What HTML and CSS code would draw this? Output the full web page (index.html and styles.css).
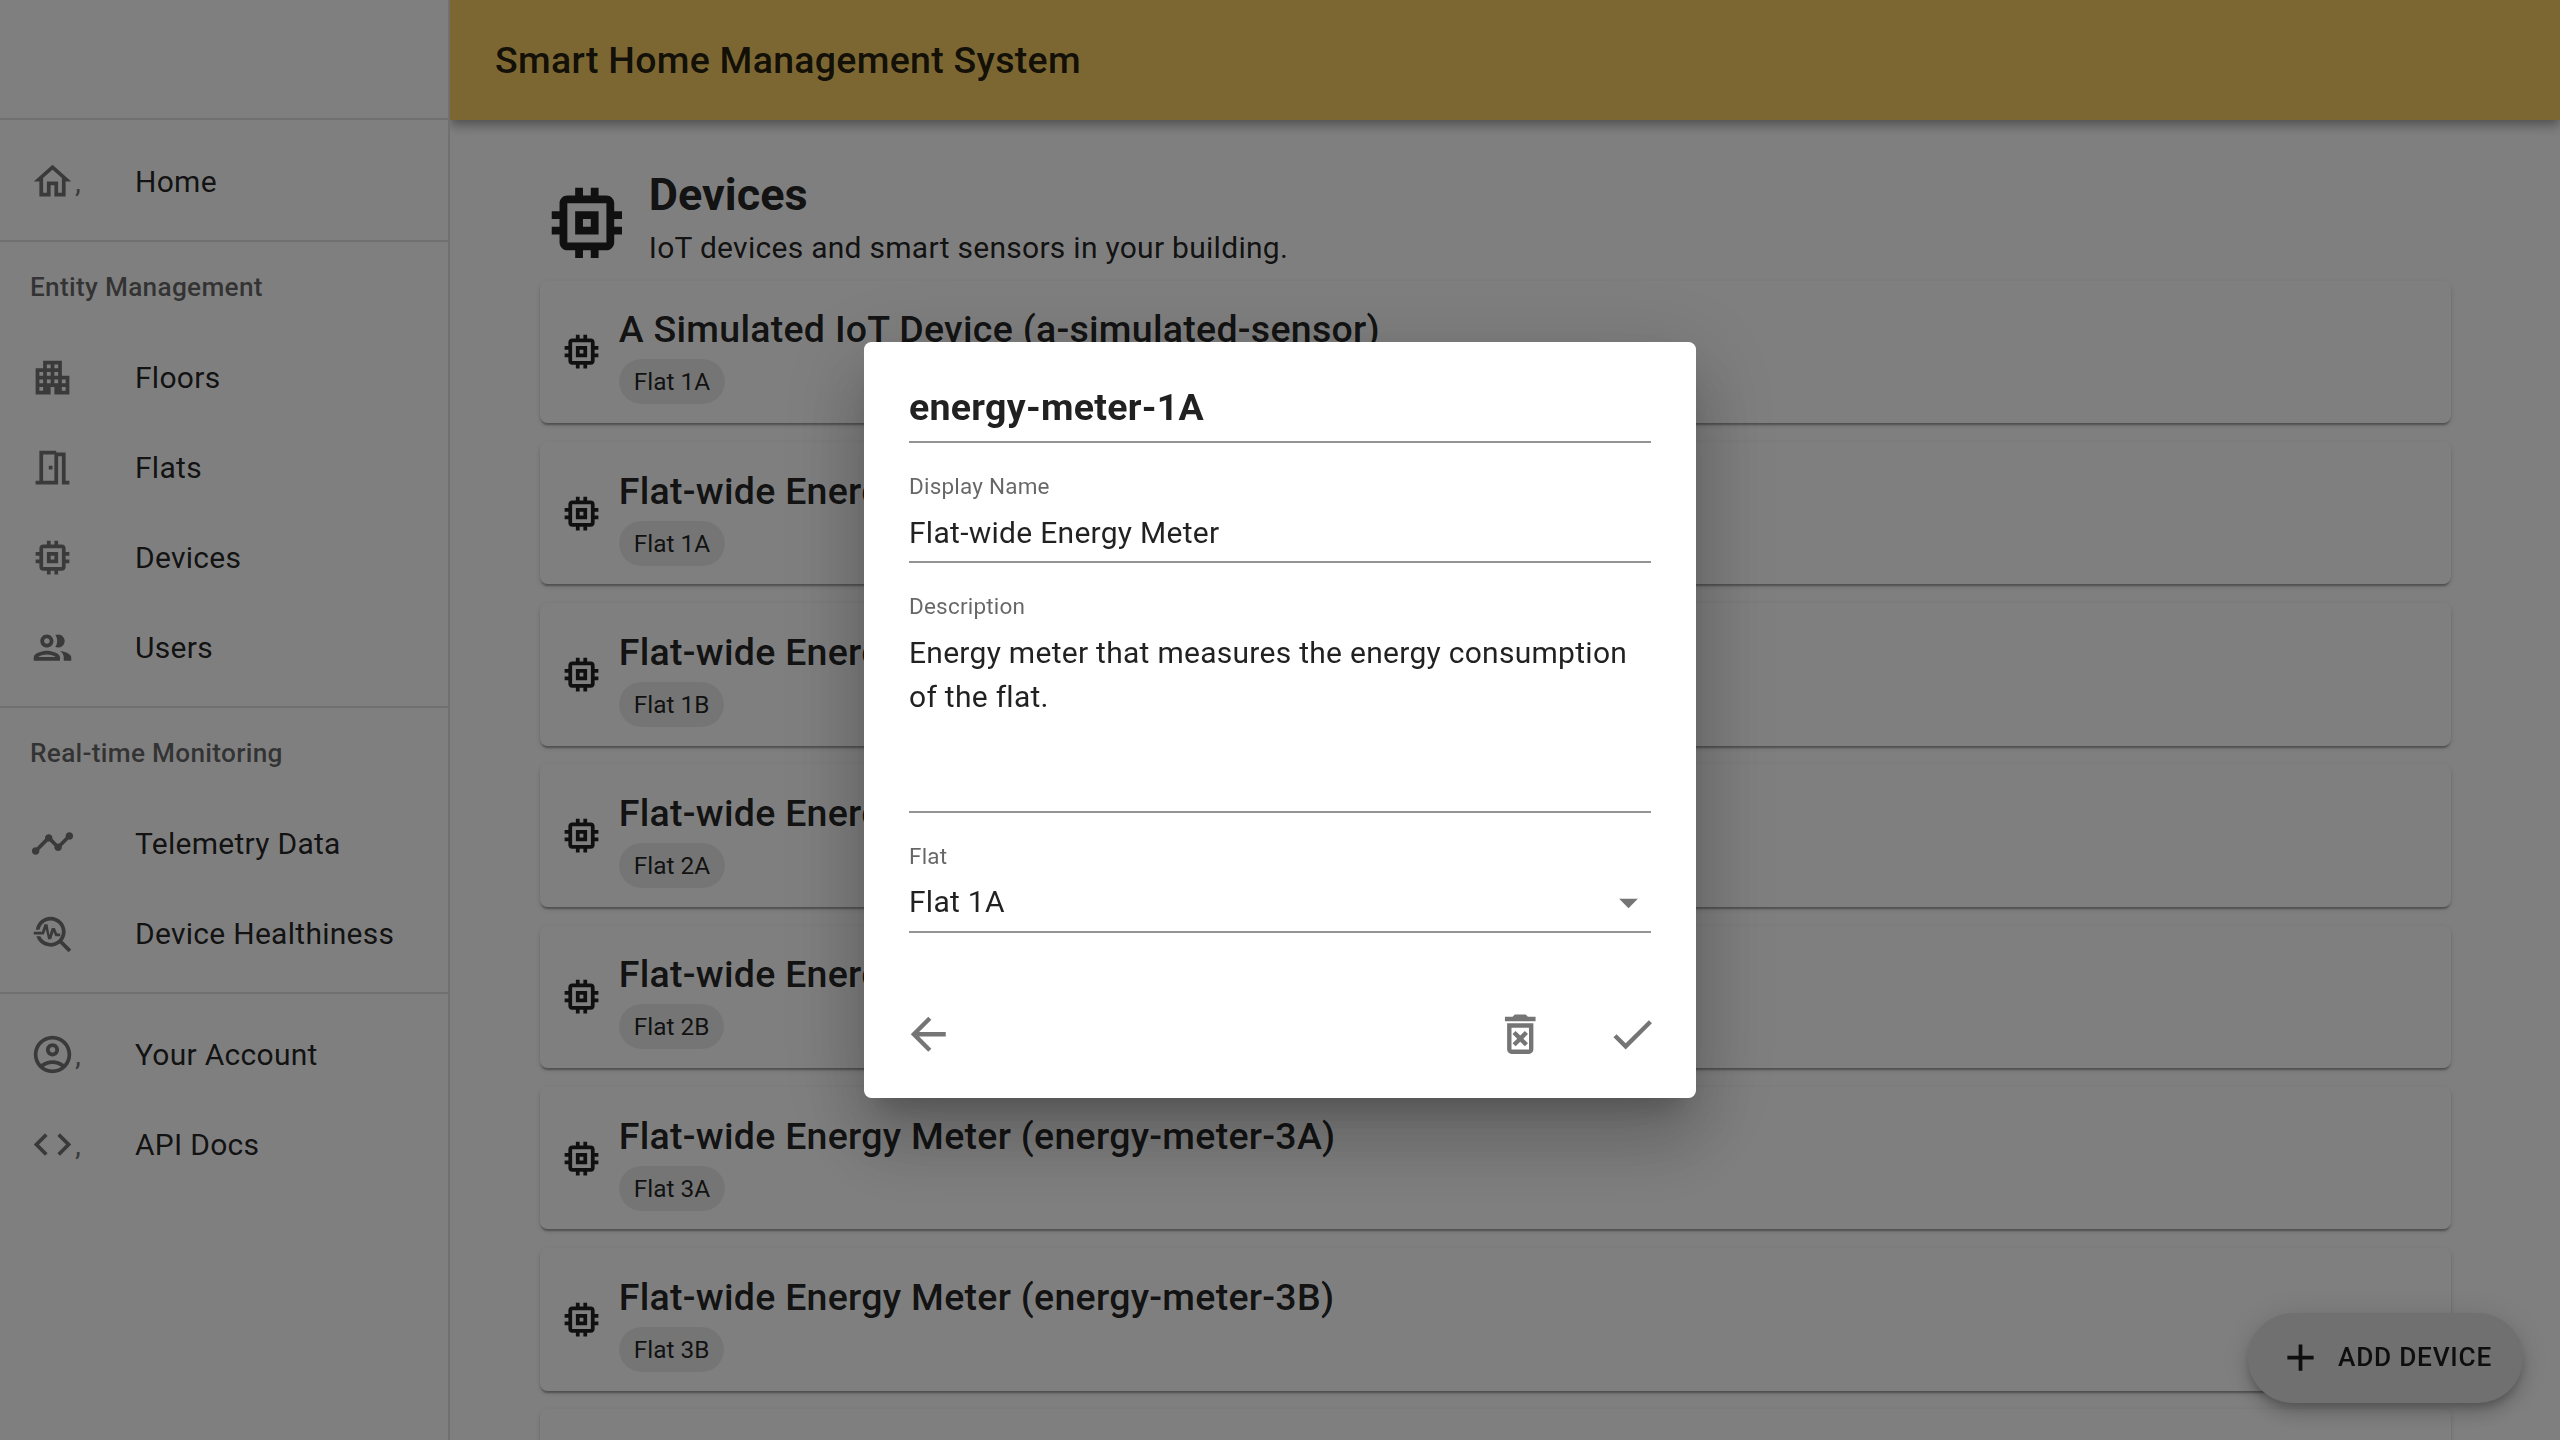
FILE: index.html
```html
<!DOCTYPE html>
<html lang="en">
<head>
    <meta charset="UTF-8">
    <title>Devices - Smart Home Management System</title>
    <link rel="stylesheet" href="styles.css">
</head>
<body>
    <svg class="icon-defs" aria-hidden="true">
        <symbol id="i-memory" viewBox="0 0 24 24"><path d="M15 9H9v6h6V9zm-2 4h-2v-2h2v2zm8-2V9h-2V7c0-1.1-.9-2-2-2h-2V3h-2v2h-2V3H9v2H7c-1.1 0-2 .9-2 2v2H3v2h2v2H3v2h2v2c0 1.1.9 2 2 2h2v2h2v-2h2v2h2v-2h2c1.1 0 2-.9 2-2v-2h2v-2h-2v-2h2zm-4 6H7V7h10v10z"/></symbol>
    </svg>

    <div class="app">
        <nav class="drawer">
            <div class="drawer-top"></div>
            <ul class="nav-list first">
                <li class="nav-item">
                    <span class="nav-icon"><svg viewBox="0 0 24 24"><path d="M12 5.69l5 4.5V18h-2v-6H9v6H7v-7.81l5-4.5M12 3L2 12h3v8h6v-6h2v6h6v-8h3L12 3z"/></svg>,</span>
                    <span>Home</span>
                </li>
            </ul>
            <ul class="nav-list no-top">
                <li class="nav-header">Entity Management</li>
                <li class="nav-item">
                    <span class="nav-icon"><svg viewBox="0 0 24 24"><path d="M17 11V3H7v4H3v14h8v-4h2v4h8V11h-4zM7 19H5v-2h2v2zm0-4H5v-2h2v2zm0-4H5V9h2v2zm4 4H9v-2h2v2zm0-4H9V9h2v2zm0-4H9V5h2v2zm4 8h-2v-2h2v2zm0-4h-2V9h2v2zm0-4h-2V5h2v2zm4 12h-2v-2h2v2zm0-4h-2v-2h2v2z"/></svg></span>
                    <span>Floors</span>
                </li>
                <li class="nav-item">
                    <span class="nav-icon"><svg viewBox="0 0 24 24"><path d="M19 19V4h-5V3H5v16H3v2h12V6h2v15h4v-2h-2zm-6 0H7V5h6v14zm-3-8h2v2h-2z"/></svg></span>
                    <span>Flats</span>
                </li>
                <li class="nav-item">
                    <span class="nav-icon"><svg viewBox="0 0 24 24"><use href="#i-memory"/></svg></span>
                    <span>Devices</span>
                </li>
                <li class="nav-item">
                    <span class="nav-icon"><svg viewBox="0 0 24 24"><path d="M9 13.75c-2.34 0-7 1.17-7 3.5V19h14v-1.75c0-2.33-4.66-3.5-7-3.5zM4.34 17c.84-.58 2.87-1.25 4.66-1.25s3.82.67 4.66 1.25H4.34zM9 12c1.93 0 3.5-1.57 3.5-3.5S10.93 5 9 5 5.5 6.57 5.5 8.5 7.07 12 9 12zm0-5c.83 0 1.5.67 1.5 1.5S9.83 10 9 10s-1.5-.67-1.5-1.5S8.17 7 9 7zm7.04 6.81c1.16.84 1.96 1.96 1.96 3.44V19h4v-1.75c0-2.02-3.5-3.17-5.96-3.44zM15 12c1.93 0 3.5-1.57 3.5-3.5S16.93 5 15 5c-.54 0-1.04.13-1.5.35.63.89 1 1.98 1 3.15s-.37 2.26-1 3.15c.46.22.96.35 1.5.35z"/></svg></span>
                    <span>Users</span>
                </li>
            </ul>
            <ul class="nav-list no-top">
                <li class="nav-header">Real-time Monitoring</li>
                <li class="nav-item">
                    <span class="nav-icon"><svg viewBox="0 0 24 24"><path d="M23 8c0 1.1-.9 2-2 2-.18 0-.35-.02-.51-.07l-3.56 3.55c.05.16.07.34.07.52 0 1.1-.9 2-2 2s-2-.9-2-2c0-.18.02-.36.07-.52l-2.55-2.55c-.16.05-.34.07-.52.07s-.36-.02-.52-.07l-4.55 4.56c.05.16.07.33.07.51 0 1.1-.9 2-2 2s-2-.9-2-2 .9-2 2-2c.18 0 .35.02.51.07l4.56-4.55C8.02 9.36 8 9.18 8 9c0-1.1.9-2 2-2s2 .9 2 2c0 .18-.02.36-.07.52l2.55 2.55c.16-.05.34-.07.52-.07s.36.02.52.07l3.55-3.56C19.02 8.35 19 8.18 19 8c0-1.1.9-2 2-2s2 .9 2 2z"/></svg></span>
                    <span>Telemetry Data</span>
                </li>
                <li class="nav-item">
                    <span class="nav-icon"><svg viewBox="0 0 24 24"><path d="M22 20.59l-4.69-4.69C18.37 14.55 19 12.85 19 11c0-4.42-3.58-8-8-8-4.08 0-7.44 3.05-7.93 7h2.02C5.57 7.17 8.03 5 11 5c3.31 0 6 2.69 6 6s-2.69 6-6 6c-2.42 0-4.5-1.44-5.45-3.5H3.4C4.45 16.69 7.46 19 11 19c1.85 0 3.55-.63 4.9-1.69L20.59 22 22 20.59z"/><path d="M8.43 9.69L9.65 15h1.64l1.26-3.78.95 2.28h2.6V12h-1.6l-1.25-3h-1.64l-1.26 3.8L9.35 7H7.7l-1.35 4H2v1.5h5.4z"/></svg></span>
                    <span>Device Healthiness</span>
                </li>
            </ul>
            <ul class="nav-list">
                <li class="nav-item">
                    <span class="nav-icon"><svg viewBox="0 0 24 24"><path d="M12 2C6.48 2 2 6.48 2 12s4.48 10 10 10 10-4.48 10-10S17.52 2 12 2zM7.35 18.5C8.66 17.56 10.26 17 12 17s3.34.56 4.65 1.5c-1.31.94-2.91 1.5-4.65 1.5s-3.34-.56-4.65-1.5zm10.79-1.38C16.45 15.8 14.32 15 12 15s-4.45.8-6.14 2.12C4.7 15.73 4 13.95 4 12c0-4.42 3.58-8 8-8s8 3.58 8 8c0 1.95-.7 3.73-1.86 5.12z"/><path d="M12 6c-1.93 0-3.5 1.57-3.5 3.5S10.07 13 12 13s3.5-1.57 3.5-3.5S13.93 6 12 6zm0 5c-.83 0-1.5-.67-1.5-1.5S11.17 8 12 8s1.5.67 1.5 1.5S12.83 11 12 11z"/></svg>,</span>
                    <span>Your Account</span>
                </li>
                <li class="nav-item">
                    <span class="nav-icon"><svg viewBox="0 0 24 24"><path d="M9.4 16.6L4.8 12l4.6-4.6L8 6l-6 6 6 6 1.4-1.4zm5.2 0l4.6-4.6-4.6-4.6L16 6l6 6-6 6-1.4-1.4z"/></svg>,</span>
                    <span>API Docs</span>
                </li>
            </ul>
        </nav>

        <div class="content">
            <header class="app-bar">Smart Home Management System</header>
            <main class="page">
                <div class="page-head">
                    <svg class="page-icon" viewBox="0 0 24 24"><use href="#i-memory"/></svg>
                    <div>
                        <h1 class="page-title">Devices</h1>
                        <p class="page-sub">IoT devices and smart sensors in your building.</p>
                    </div>
                </div>

                <div class="card">
                    <svg class="card-icon" viewBox="0 0 24 24"><use href="#i-memory"/></svg>
                    <div>
                        <div class="card-title">A Simulated IoT Device (a-simulated-sensor)</div>
                        <span class="chip">Flat 1A</span>
                    </div>
                </div>
                <div class="card">
                    <svg class="card-icon" viewBox="0 0 24 24"><use href="#i-memory"/></svg>
                    <div>
                        <div class="card-title">Flat-wide Energy Meter (energy-meter-1A)</div>
                        <span class="chip">Flat 1A</span>
                    </div>
                </div>
                <div class="card">
                    <svg class="card-icon" viewBox="0 0 24 24"><use href="#i-memory"/></svg>
                    <div>
                        <div class="card-title">Flat-wide Energy Meter (energy-meter-1B)</div>
                        <span class="chip">Flat 1B</span>
                    </div>
                </div>
                <div class="card">
                    <svg class="card-icon" viewBox="0 0 24 24"><use href="#i-memory"/></svg>
                    <div>
                        <div class="card-title">Flat-wide Energy Meter (energy-meter-2A)</div>
                        <span class="chip">Flat 2A</span>
                    </div>
                </div>
                <div class="card">
                    <svg class="card-icon" viewBox="0 0 24 24"><use href="#i-memory"/></svg>
                    <div>
                        <div class="card-title">Flat-wide Energy Meter (energy-meter-2B)</div>
                        <span class="chip">Flat 2B</span>
                    </div>
                </div>
                <div class="card">
                    <svg class="card-icon" viewBox="0 0 24 24"><use href="#i-memory"/></svg>
                    <div>
                        <div class="card-title">Flat-wide Energy Meter (energy-meter-3A)</div>
                        <span class="chip">Flat 3A</span>
                    </div>
                </div>
                <div class="card">
                    <svg class="card-icon" viewBox="0 0 24 24"><use href="#i-memory"/></svg>
                    <div>
                        <div class="card-title">Flat-wide Energy Meter (energy-meter-3B)</div>
                        <span class="chip">Flat 3B</span>
                    </div>
                </div>
                <div class="card"></div>
            </main>
        </div>
    </div>

    <button class="fab">
        <svg viewBox="0 0 24 24"><path d="M19 13h-6v6h-2v-6H5v-2h6V5h2v6h6v2z"/></svg>
        Add Device
    </button>

    <!-- edit dialog -->
    <div class="backdrop">
        <div class="dialog">
            <h2 class="dialog-title">energy-meter-1A</h2>
            <div class="field">
                <div class="field-label">Display Name</div>
                <div class="field-value">Flat-wide Energy Meter</div>
            </div>
            <div class="field">
                <div class="field-label">Description</div>
                <div class="field-value multiline">Energy meter that measures the energy consumption of the flat.</div>
            </div>
            <div class="field">
                <div class="field-label">Flat</div>
                <div class="field-value select">
                    <span>Flat 1A</span>
                    <svg viewBox="0 0 24 24"><path d="M7 10l5 5 5-5z"/></svg>
                </div>
            </div>
            <div class="dialog-actions">
                <button class="icon-btn" aria-label="Back"><svg viewBox="0 0 24 24"><path d="M20 11H7.83l5.59-5.59L12 4l-8 8 8 8 1.41-1.41L7.83 13H20v-2z"/></svg></button>
                <span class="spacer"></span>
                <button class="icon-btn" aria-label="Delete"><svg viewBox="0 0 24 24"><path d="M14.12 10.47L12 12.59l-2.13-2.12-1.41 1.41L10.59 14l-2.12 2.12 1.41 1.41L12 15.41l2.12 2.12 1.41-1.41L13.41 14l2.12-2.12zM15.5 4l-1-1h-5l-1 1H5v2h14V4zM6 19c0 1.1.9 2 2 2h8c1.1 0 2-.9 2-2V7H6v12zM8 9h8v10H8V9z"/></svg></button>
                <button class="icon-btn" aria-label="Save"><svg viewBox="0 0 24 24"><path d="M9 16.17L4.83 12l-1.42 1.41L9 19 21 7l-1.41-1.41z"/></svg></button>
            </div>
        </div>
    </div>
</body>
</html>
```

FILE: styles.css
```css
* {
    box-sizing: border-box;
}
html, body {
    height: 100%;
}
body {
    margin: 0;
    overflow: hidden;
    font-family: 'Roboto', 'Liberation Sans', sans-serif;
    font-size: 30px;
    letter-spacing: 0.28px;
    color: rgba(0, 0, 0, 0.87);
    background-color: #fff;
}
svg {
    fill: currentColor;
    display: block;
}
.icon-defs {
    display: none;
}
.app {
    display: flex;
    height: 100%;
    overflow: hidden;
}

/* sidebar */
.drawer {
    width: 450px;
    flex-shrink: 0;
    border-right: 2px solid rgba(0, 0, 0, 0.12);
}
.drawer-top {
    height: 120px;
    border-bottom: 2px solid rgba(0, 0, 0, 0.12);
}
.nav-list {
    list-style: none;
    margin: 0;
    padding: 15px 0;
    border-bottom: 2px solid rgba(0, 0, 0, 0.12);
}
.nav-list:last-child {
    border-bottom: none;
}
.nav-list.first {
    padding: 16px 0 14px;
}
.nav-list.no-top {
    padding: 0 0 14px;
}
.nav-header {
    height: 90px;
    line-height: 90px;
    padding-left: 30px;
    font-size: 26.25px;
    font-weight: 500;
    color: rgba(0, 0, 0, 0.6);
}
.nav-item {
    display: flex;
    align-items: center;
    height: 90px;
    padding-left: 30px;
}
.nav-icon {
    display: flex;
    align-items: center;
    width: 105px;
    flex-shrink: 0;
    color: rgba(0, 0, 0, 0.54);
}
.nav-icon svg {
    width: 45px;
    height: 45px;
}

/* top bar */
.content {
    flex: 1;
    min-width: 0;
    height: 100%;
    overflow: hidden;
}
.app-bar {
    height: 120px;
    line-height: 120px;
    padding-left: 45px;
    font-size: 37.5px;
    font-weight: 500;
    background-color: #f9ce66;
    box-shadow: 0 4px 8px -2px rgba(0, 0, 0, 0.2), 0 8px 9px 0 rgba(0, 0, 0, 0.14), 0 2px 19px 0 rgba(0, 0, 0, 0.12);
    position: relative;
}

/* device list */
.page {
    padding: 45px 109px 0 90px;
}
.page-head {
    display: flex;
    align-items: flex-start;
    gap: 15px;
    margin-bottom: 10.5px;
}
.page-icon {
    width: 93.75px;
    height: 93.75px;
    margin-top: 11px;
    flex-shrink: 0;
}
.page-title {
    margin: 0;
    font-size: 45px;
    font-weight: 700;
    line-height: 60px;
    letter-spacing: 0;
}
.page-sub {
    margin: 0;
    line-height: 45px;
}
.card {
    display: flex;
    align-items: center;
    gap: 15px;
    height: 142.5px;
    margin-bottom: 18.75px;
    padding-left: 18.75px;
    background-color: #fff;
    border-radius: 7.5px;
    box-shadow: 0 4px 2px -2px rgba(0, 0, 0, 0.2), 0 2px 2px 0 rgba(0, 0, 0, 0.14), 0 2px 6px 0 rgba(0, 0, 0, 0.12);
}
.card-icon {
    width: 45px;
    height: 45px;
    flex-shrink: 0;
}
.card-title {
    font-size: 37.5px;
    font-weight: 500;
    line-height: 60px;
}
.chip {
    display: inline-block;
    height: 45px;
    line-height: 45px;
    padding: 0 15px;
    font-size: 24.4px;
    letter-spacing: 0;
    border-radius: 22.5px;
    background-color: rgba(0, 0, 0, 0.08);
    vertical-align: top;
}

/* floating button */
.fab {
    position: fixed;
    right: 37px;
    bottom: 37px;
    display: flex;
    align-items: center;
    gap: 15px;
    height: 90px;
    padding: 0 31px 2px 30px;
    border: none;
    border-radius: 45px;
    font-family: inherit;
    font-size: 26.25px;
    font-weight: 500;
    letter-spacing: 0.75px;
    text-transform: uppercase;
    color: rgba(0, 0, 0, 0.87);
    background-color: #e0e0e0;
    box-shadow: 0 6px 9px -2px rgba(0, 0, 0, 0.2), 0 11px 19px 0 rgba(0, 0, 0, 0.14), 0 2px 34px 0 rgba(0, 0, 0, 0.12);
}
.fab svg {
    width: 45px;
    height: 45px;
}

/* dialog */
.backdrop {
    position: fixed;
    top: 0;
    left: 0;
    width: 100%;
    height: 100%;
    display: flex;
    align-items: center;
    justify-content: center;
    background-color: rgba(0, 0, 0, 0.5);
}
.dialog {
    width: 832px;
    height: 756px;
    background-color: #fff;
    border-radius: 7.5px;
    box-shadow: 0 21px 28px -13px rgba(0, 0, 0, 0.2), 0 45px 71px 6px rgba(0, 0, 0, 0.14), 0 17px 86px 15px rgba(0, 0, 0, 0.12);
}
.dialog-title {
    margin: 35px 45px 28px;
    padding-bottom: 4px;
    font-size: 37.5px;
    font-weight: 700;
    line-height: 60px;
    border-bottom: 2px solid rgba(0, 0, 0, 0.42);
}
.field {
    margin: 0 45px 28px;
}
.field-label {
    height: 30px;
    line-height: 30px;
    font-size: 22.5px;
    letter-spacing: 0.21px;
    color: rgba(0, 0, 0, 0.6);
}
.field-value {
    margin-top: 10px;
    padding-bottom: 6px;
    line-height: 44px;
    border-bottom: 2px solid rgba(0, 0, 0, 0.42);
}
.field-value.multiline {
    height: 182px;
    line-height: 43.5px;
}
.field-value.select {
    display: flex;
    justify-content: space-between;
    align-items: center;
    margin-top: 9px;
    padding-bottom: 7px;
}
.field-value.select svg {
    width: 45px;
    height: 45px;
    margin: -1px 0;
    color: rgba(0, 0, 0, 0.54);
}
.dialog-actions {
    display: flex;
    gap: 15px;
    padding: 0 15px;
    margin-top: 52px;
}
.spacer {
    flex: 1;
}
.icon-btn {
    padding: 22.5px;
    border: none;
    background: none;
    color: rgba(0, 0, 0, 0.54);
}
.icon-btn svg {
    width: 52.5px;
    height: 52.5px;
}
```
